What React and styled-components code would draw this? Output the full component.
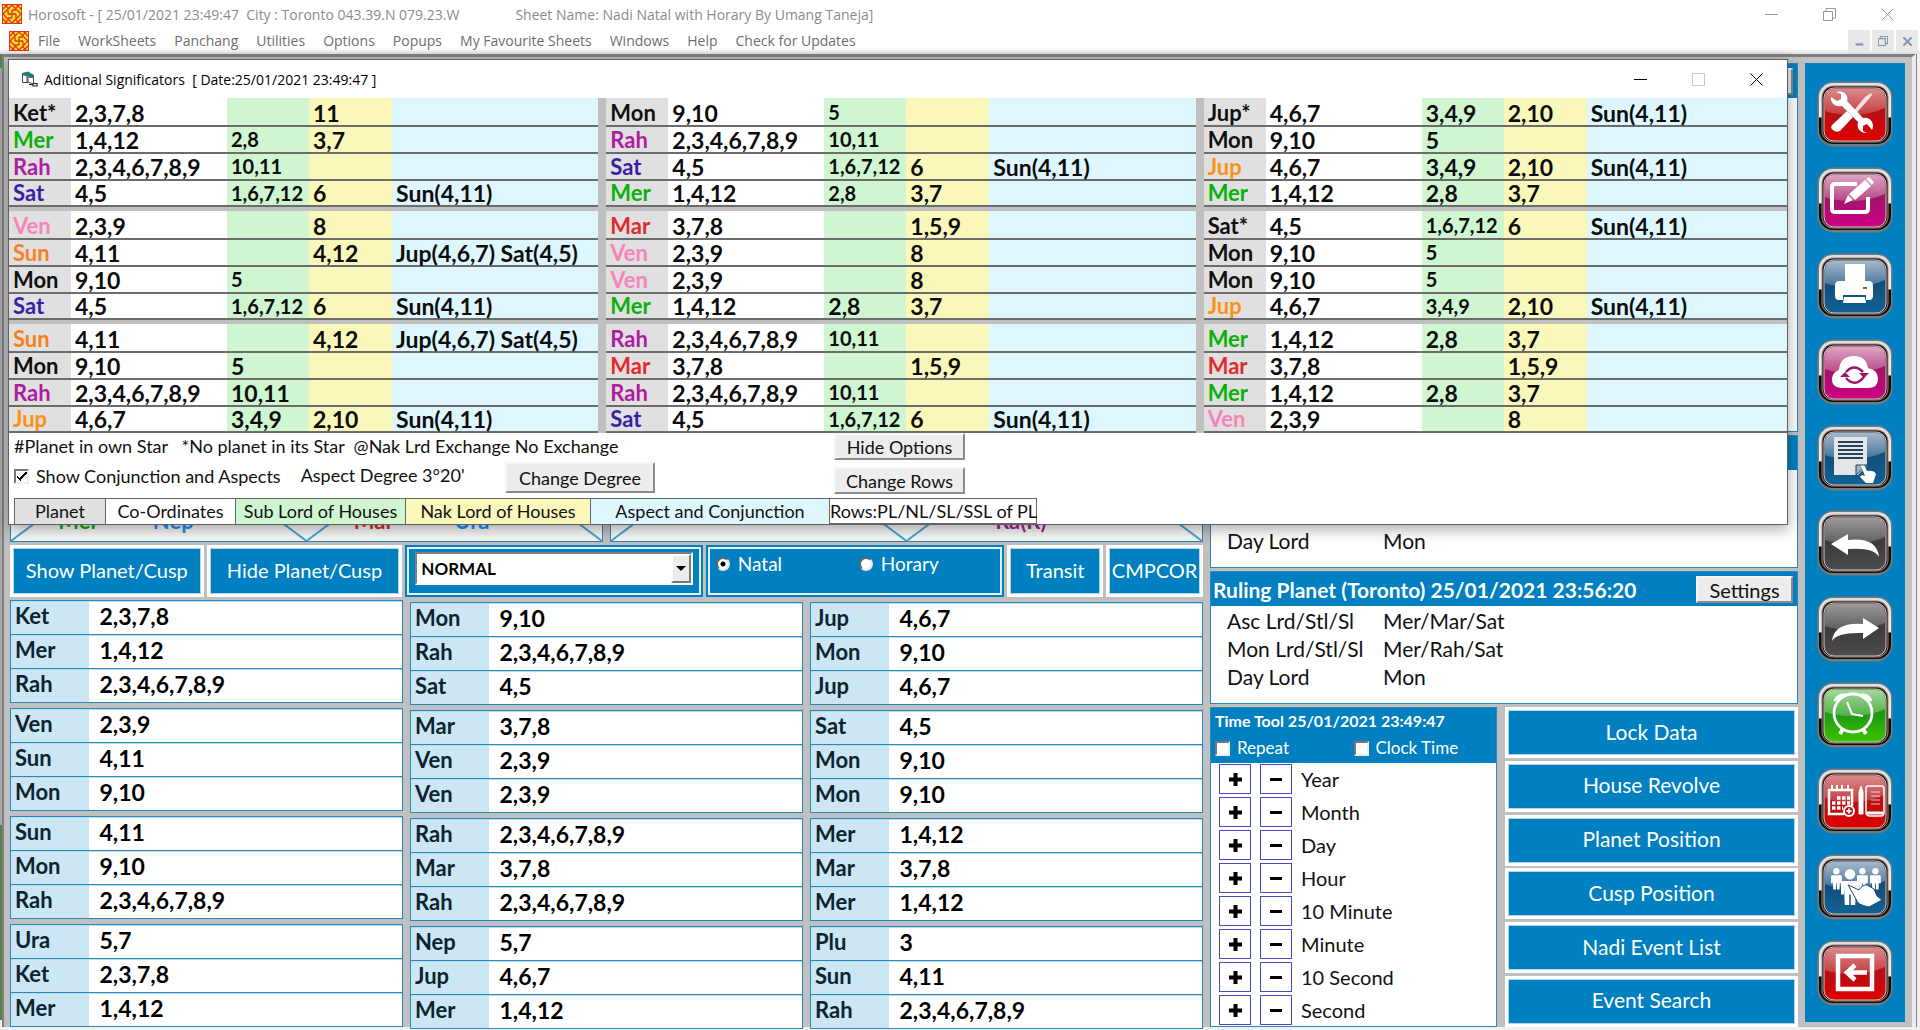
import React from 'react';
import styled, { createGlobalStyle } from 'styled-components';

const BLUE = '#0080c0';
const LINE = '#2a86bb';
const SILVER = '#c0c0c0';

const PLANET_COLORS = {
  Ket: '#101010',
  Mon: '#101010',
  Mer: '#0bb00b',
  Rah: '#b01ca0',
  Sat: '#3a1ea6',
  Ven: '#f784bb',
  Sun: '#fb7f1c',
  Mar: '#df2b2b',
  Jup: '#fb9112'
};

const GlobalStyle = createGlobalStyle`
  * {
    box-sizing: border-box;
  }

  body {
    margin: 0;
    background-color: #fff;
    font-family: Lato, 'Open Sans', sans-serif;
    color: #111;
  }

  button, input, select {
    font-family: inherit;
    margin: 0;
  }

  table {
    border-collapse: collapse;
    border-spacing: 0;
  }
`;

const Screen = styled.div`
  min-height: 100vh;
  display: flex;
  flex-direction: column;
`;

const TitleBar = styled.header`
  display: flex;
  align-items: center;
  height: 28px;
  padding: 0 26px 0 2px;
  font-family: 'Open Sans', sans-serif;
  font-size: 14px;
  color: #8c8c8c;
`;

const TitleText = styled.span`
  white-space: pre;
  margin-left: 6px;
`;

const SheetName = styled.span`
  margin-left: 56px;
  flex-grow: 1;
`;

const WindowControls = styled.div`
  display: flex;
  gap: ${props => props.$gap}px;
`;

const WindowButton = styled.button`
  display: flex;
  padding: 0;
  border: 0;
  background: none;
  color: ${props => props.$color};
`;

const MenuBar = styled.nav`
  display: flex;
  align-items: center;
  height: 26px;
  padding: 0 2px 0 9px;
  background: linear-gradient(#fff 80%, #dcdcdc);
`;

const MenuList = styled.div`
  display: flex;
  flex-grow: 1;
  gap: 18px;
  padding-left: 9px;
`;

const MenuLink = styled.a`
  font-family: 'Open Sans', sans-serif;
  font-size: 14px;
  line-height: 20px;
  color: #6e6e6e;
  text-decoration: none;
`;

const ChildControls = styled.div`
  display: flex;
  align-self: flex-start;
  gap: 2px;
  padding-top: 2px;
`;

const ChildButton = styled.button`
  display: flex;
  align-items: center;
  justify-content: center;
  width: 22px;
  height: 22px;
  padding: 0;
  border: 0;
  background-color: #e8e8e8;
  color: #8399ae;
`;

const Desktop = styled.div`
  position: relative;
  display: flex;
  flex-grow: 1;
  padding: 0 4px 3px 2px;
  background: linear-gradient(#4b8a50 0 14px, #a8a8a8 14px 79%, #55804a 79% 99%, #f0f0f0 99%) 0 0 / 2px 100% no-repeat, #f0f0f0;
`;

const Workspace = styled.main`
  flex-grow: 1;
  display: grid;
  grid-template-columns: 1193fr 588fr 100px;
  gap: 7px;
  padding: 6px 7px 0 6px;
  background-color: ${SILVER};
  border: 0 solid #7f7f7f;
  border-width: 3px 0 0 2px;
  border-right: 4px solid #ececec;
  box-shadow: 1px 0 0 #808080;
`;

const Column = styled.section`
  display: flex;
  flex-direction: column;
  min-width: 0;
`;

const Charts = styled.div`
  flex-grow: 1;
  display: grid;
  grid-template-columns: 1fr 1fr;
  gap: 7px;
`;

const ChartPanel = styled.div`
  display: flex;
  flex-direction: column;
  border: 1px solid ${LINE};
  background-color: #f8f8f8;
`;

const PanelHead = styled.div`
  display: flex;
  align-items: center;
  justify-content: space-between;
  height: 34px;
  padding: 0 4px 0 2px;
  background-color: ${BLUE};
  color: #fff;
  font-size: 21px;
  font-weight: 700;
  white-space: nowrap;
`;

const ChartSvg = styled.svg`
  display: block;
  width: 100%;
  flex: 1 1 0;
  min-height: 300px;

  line {
    stroke: #4aa5d4;
    stroke-width: 2;
  }

  text {
    font-size: 22px;
    font-weight: 700;
  }
`;

const Toolbar = styled.div`
  display: grid;
  grid-template-columns: 194fr 196fr 298fr 299fr 96fr 97fr;
  gap: 3px;
  padding: 3px 0 3px;
`;

const ActionButton = styled.button`
  min-width: 0;
  height: ${props => props.$tall ? 52 : 51}px;
  padding: 0 0 3px;
  border: 3px solid #fff;
  outline: 1px solid #b4d6ea;
  outline-offset: -4px;
  background-color: ${BLUE};
  color: #fff;
  font-size: ${props => props.$tall ? 20 : 21}px;
  white-space: nowrap;
`;

const ToolGroup = styled.div`
  display: flex;
  align-items: flex-start;
  min-width: 0;
  border: 2px solid ${BLUE};
  outline: 2px solid #e4f3fb;
  outline-offset: -4px;
  background-color: ${BLUE};
  padding: 5px 8px;
  color: #fff;
`;

const SelectBox = styled.div`
  position: relative;
  flex-grow: 1;
  height: 33px;
  border: 2px solid;
  border-color: #808080 #fff #fff #808080;
  background-color: #fff;
`;

const Select = styled.select`
  appearance: none;
  width: 100%;
  height: 100%;
  padding: 0 24px 0 4px;
  border: 0;
  background: none;
  color: #000;
  font-size: 17px;
  font-weight: 700;
`;

const SelectArrow = styled.span`
  position: absolute;
  top: 0;
  right: 0;
  bottom: 0;
  width: 20px;
  display: flex;
  align-items: center;
  justify-content: center;
  border: 2px solid;
  border-color: #fff #777 #777 #fff;
  background-color: #ececec;
  pointer-events: none;
`;

const RadioLabel = styled.label`
  display: flex;
  align-items: center;
  gap: 8px;
  font-size: 19px;
  line-height: 24px;

  &:first-child {
    width: 143px;
  }
`;

const Radio = styled.input`
  appearance: none;
  width: 14px;
  height: 14px;
  border: 2px solid;
  border-color: #666 #e8e8e8 #e8e8e8 #666;
  border-radius: 50%;
  background-color: #fff;

  &:checked {
    background-image: radial-gradient(circle, #000 0 2px, transparent 3px);
  }
`;

const Houses = styled.div`
  display: grid;
  grid-template-columns: repeat(3, 1fr);
  gap: 7px;
`;

const HouseColumn = styled.div`
  display: flex;
  flex-direction: column;
  gap: 5px;

  &:not(:first-child) {
    padding-top: 2px;
    margin-bottom: -2px;
  }
`;

const HouseTable = styled.table`
  width: 100%;
  height: 103px;
  table-layout: fixed;
  border: 1px solid ${LINE};
  background-color: #fff;
  text-align: left;
`;

const HouseName = styled.th`
  width: 78px;
  height: 34px;
  padding: 0 0 4px 4px;
  border-bottom: 1px solid ${LINE};
  box-shadow: inset 0 1px 0 #b9dff3;
  background-color: #cce6f4;
  color: #0b2430;
  font-size: 22px;
  line-height: 26px;
`;

const HouseValue = styled.td`
  padding: 0 0 4px 11px;
  border-bottom: 1px solid ${LINE};
  box-shadow: inset 0 1px 0 #b9dff3;
  color: #000;
  font-size: 23px;
  font-weight: 700;
  line-height: 26px;
`;

const RulingPanel = styled.div`
  flex-grow: ${props => props.$grow ? 1 : 0};
  min-height: 133px;
  margin-bottom: 3px;
  border: 1px solid ${LINE};
  background-color: #fff;
`;

const RulingTable = styled.table`
  margin: 1px 0 0 16px;
  font-size: 21px;
  line-height: 28px;
  text-align: left;

  th {
    width: 156px;
    padding: 0;
    font-weight: 400;
  }

  td {
    padding: 0;
  }
`;

const BevelButton = styled.button`
  width: ${props => props.$width}px;
  height: ${props => props.$height || 27}px;
  padding: 0;
  border: 2px solid;
  border-color: #f6f6f6 #8a8a8a #8a8a8a #f6f6f6;
  background-color: #ededed;
  color: #111;
  font-size: ${props => props.$size || 18}px;
`;

const ToolRow = styled.div`
  display: grid;
  grid-template-columns: 287fr 293fr;
  gap: 8px;
`;

const TimeTool = styled.div`
  border: 1px solid ${LINE};
  background-color: #fff;
`;

const TimeHead = styled.div`
  height: 55px;
  padding: 0 4px;
  background-color: ${BLUE};
  color: #fff;
`;

const TimeTitle = styled.div`
  font-size: 16px;
  line-height: 26px;
  font-weight: 700;
  white-space: nowrap;
`;

const TimeChecks = styled.div`
  display: grid;
  grid-template-columns: 1fr 1fr;
`;

const CheckLabel = styled.label`
  display: flex;
  align-items: center;
  gap: 7px;
  font-size: ${props => props.$size}px;
  line-height: 28px;
  white-space: nowrap;
`;

const Checkbox = styled.input`
  appearance: none;
  width: 15px;
  height: 15px;
  flex-shrink: 0;
  border: 2px solid;
  border-color: #777 #eee #eee #777;
  background-color: #fff;

  &:checked {
    background-image: linear-gradient(45deg, transparent 30%, #000 30% 46%, transparent 46%),
      linear-gradient(-45deg, transparent 40%, #000 40% 60%, transparent 60%);
    background-size: 4px 7px, 8px 8px;
    background-position: 1px 3px, 3px 1px;
    background-repeat: no-repeat;
  }
`;

const StepList = styled.div`
  display: flex;
  flex-direction: column;
  gap: 3px;
  padding: 1px 0 1px 8px;
`;

const Step = styled.div`
  display: flex;
  align-items: center;
  gap: 9px;
  font-size: 20px;
  line-height: 30px;
`;

const StepButton = styled.button`
  display: flex;
  align-items: center;
  justify-content: center;
  width: 32px;
  height: 30px;
  padding: 0;
  border: 1px solid #4a4ac0;
  background-color: #fff;
`;

const Actions = styled.div`
  display: flex;
  flex-direction: column;
  justify-content: space-between;
`;

const Sidebar = styled.aside`
  display: flex;
  flex-direction: column;
  align-items: center;
  justify-content: space-between;
  margin-bottom: 5px;
  padding: 18px 0 16px;
  background-color: ${BLUE};
`;

const SideButton = styled.button`
  display: flex;
  padding: 0;
  border: 0;
  background: none;
`;

const Popup = styled.section`
  position: absolute;
  top: 5px;
  left: 8px;
  right: 132px;
  border: 1px solid #606060;
  background-color: #fff;
  box-shadow: 0 4px 14px rgba(0, 0, 0, 0.35);
`;

const PopupHead = styled.div`
  display: flex;
  align-items: center;
  height: 38px;
  padding: 0 24px 0 12px;
  font-family: 'Open Sans', sans-serif;
  font-size: 14px;
  color: #000;
`;

const PopupTitle = styled.span`
  flex-grow: 1;
  margin-left: 6px;
  white-space: pre;
`;

const Significators = styled.div`
  display: grid;
  grid-template-columns: 589fr 589fr 583fr;
  column-gap: 8px;
  row-gap: 4px;
  background-color: ${SILVER};
`;

const SigTable = styled.table`
  width: 100%;
  table-layout: fixed;
  font-weight: 700;
  color: #0c0c0c;
  text-align: left;
  white-space: nowrap;

  th, td {
    height: 27px;
    padding: 0 0 0 4px;
    border-bottom: 2px solid #6c6c6c;
    line-height: 24px;
  }

  tr:first-child > * {
    height: 28px;
    padding-top: 2px;
  }

  tr:last-child > * {
    height: 26px;
  }
`;

const SigName = styled.th`
  width: 62px;
  background-color: #e0e0e0;
  color: ${props => props.$color};
  font-size: 22px;
`;

const SigCell = styled.td`
  width: ${props => props.$width ? `${props.$width}px` : 'auto'};
  background-color: ${props => props.$bg};
  font-size: ${props => props.$small ? 20 : 23}px;
  vertical-align: ${props => props.$small ? 'top' : 'middle'};
`;

const Options = styled.div`
  display: grid;
  grid-template-columns: 491px 329px 131px;
  grid-template-rows: 29px 36px;
  padding-left: 5px;
  font-size: 18px;
  line-height: 26px;
`;

const Note = styled.div`
  grid-column: span 2;
  white-space: pre;
`;

const Conjunction = styled.div`
  display: flex;
  align-items: flex-start;
  gap: 20px;
`;

const ButtonSlot = styled.div`
  display: flex;
  align-items: ${props => props.$end ? 'flex-end' : 'flex-start'};
  padding-bottom: ${props => props.$end ? 4 : 0}px;
`;

const Legend = styled.div`
  display: flex;
  padding-left: 5px;
`;

const LegendItem = styled.div`
  width: ${props => props.$width}px;
  height: 26px;
  border: 1px solid #666;
  border-width: 1px 0 0 1px;
  background-color: ${props => props.$bg};
  font-size: 18px;
  line-height: 25px;
  text-align: center;
  white-space: nowrap;

  &:last-child {
    border-width: 1px;
  }
`;

const MENU = ['File', 'WorkSheets', 'Panchang', 'Utilities', 'Options', 'Popups',
  'My Favourite Sheets', 'Windows', 'Help', 'Check for Updates'];

// name, coordinates, sub lord, nak lord, aspect, small sub lord text
const SIGNIFICATORS = [
  [
    ['Ket*', '2,3,7,8', '', '11', ''],
    ['Mer', '1,4,12', '2,8', '3,7', '', true],
    ['Rah', '2,3,4,6,7,8,9', '10,11', '', '', true],
    ['Sat', '4,5', '1,6,7,12', '6', 'Sun(4,11)', true]
  ],
  [
    ['Mon', '9,10', '5', '', '', true],
    ['Rah', '2,3,4,6,7,8,9', '10,11', '', '', true],
    ['Sat', '4,5', '1,6,7,12', '6', 'Sun(4,11)', true],
    ['Mer', '1,4,12', '2,8', '3,7', '', true]
  ],
  [
    ['Jup*', '4,6,7', '3,4,9', '2,10', 'Sun(4,11)'],
    ['Mon', '9,10', '5', '', ''],
    ['Jup', '4,6,7', '3,4,9', '2,10', 'Sun(4,11)'],
    ['Mer', '1,4,12', '2,8', '3,7', '']
  ],
  [
    ['Ven', '2,3,9', '', '8', ''],
    ['Sun', '4,11', '', '4,12', 'Jup(4,6,7) Sat(4,5)'],
    ['Mon', '9,10', '5', '', '', true],
    ['Sat', '4,5', '1,6,7,12', '6', 'Sun(4,11)', true]
  ],
  [
    ['Mar', '3,7,8', '', '1,5,9', ''],
    ['Ven', '2,3,9', '', '8', ''],
    ['Ven', '2,3,9', '', '8', ''],
    ['Mer', '1,4,12', '2,8', '3,7', '']
  ],
  [
    ['Sat*', '4,5', '1,6,7,12', '6', 'Sun(4,11)', true],
    ['Mon', '9,10', '5', '', '', true],
    ['Mon', '9,10', '5', '', '', true],
    ['Jup', '4,6,7', '3,4,9', '2,10', 'Sun(4,11)', true]
  ],
  [
    ['Sun', '4,11', '', '4,12', 'Jup(4,6,7) Sat(4,5)'],
    ['Mon', '9,10', '5', '', ''],
    ['Rah', '2,3,4,6,7,8,9', '10,11', '', ''],
    ['Jup', '4,6,7', '3,4,9', '2,10', 'Sun(4,11)']
  ],
  [
    ['Rah', '2,3,4,6,7,8,9', '10,11', '', '', true],
    ['Mar', '3,7,8', '', '1,5,9', ''],
    ['Rah', '2,3,4,6,7,8,9', '10,11', '', '', true],
    ['Sat', '4,5', '1,6,7,12', '6', 'Sun(4,11)', true]
  ],
  [
    ['Mer', '1,4,12', '2,8', '3,7', ''],
    ['Mar', '3,7,8', '', '1,5,9', ''],
    ['Mer', '1,4,12', '2,8', '3,7', ''],
    ['Ven', '2,3,9', '', '8', '']
  ]
];

const HOUSES = [
  [
    [['Ket', '2,3,7,8'], ['Mer', '1,4,12'], ['Rah', '2,3,4,6,7,8,9']],
    [['Ven', '2,3,9'], ['Sun', '4,11'], ['Mon', '9,10']],
    [['Sun', '4,11'], ['Mon', '9,10'], ['Rah', '2,3,4,6,7,8,9']],
    [['Ura', '5,7'], ['Ket', '2,3,7,8'], ['Mer', '1,4,12']]
  ],
  [
    [['Mon', '9,10'], ['Rah', '2,3,4,6,7,8,9'], ['Sat', '4,5']],
    [['Mar', '3,7,8'], ['Ven', '2,3,9'], ['Ven', '2,3,9']],
    [['Rah', '2,3,4,6,7,8,9'], ['Mar', '3,7,8'], ['Rah', '2,3,4,6,7,8,9']],
    [['Nep', '5,7'], ['Jup', '4,6,7'], ['Mer', '1,4,12']]
  ],
  [
    [['Jup', '4,6,7'], ['Mon', '9,10'], ['Jup', '4,6,7']],
    [['Sat', '4,5'], ['Mon', '9,10'], ['Mon', '9,10']],
    [['Mer', '1,4,12'], ['Mar', '3,7,8'], ['Mer', '1,4,12']],
    [['Plu', '3'], ['Sun', '4,11'], ['Rah', '2,3,4,6,7,8,9']]
  ]
];

const LEGEND = [
  ['Planet', 91, '#e0e0e0'],
  ['Co-Ordinates', 130, '#fff'],
  ['Sub Lord of Houses', 170, '#cff5d1'],
  ['Nak Lord of Houses', 185, '#faf7bb'],
  ['Aspect and Conjunction', 239, '#def6fe'],
  ['Rows:PL/NL/SL/SSL of PL', 208, '#fff']
];

const RULING = [
  ['Asc Lrd/Stl/Sl', 'Mer/Mar/Sat'],
  ['Mon Lrd/Stl/Sl', 'Mer/Rah/Sat'],
  ['Day Lord', 'Mon']
];

const STEPS = ['Year', 'Month', 'Day', 'Hour', '10 Minute', 'Minute', '10 Second', 'Second'];

const ACTIONS = ['Lock Data', 'House Revolve', 'Planet Position', 'Cusp Position',
  'Nadi Event List', 'Event Search'];

const LogoIcon = () => (
  <svg width="20" height="20" viewBox="0 0 20 20" aria-hidden="true">
    <rect width="20" height="20" fill="#ffdc28" />
    <g fill="none" stroke="#e2331a" strokeWidth="1.3">
      <path d="M10 1 L19 10 L10 19 L1 10 Z" />
      <path d="M0 6 L6 0 M14 0 L20 6 M0 14 L6 20 M14 20 L20 14" />
      <path d="M2 0 L7 5 M18 0 L13 5 M2 20 L7 15 M18 20 L13 15" />
      <path d="M10 6 V14 M6 10 H14 M10 6 H14 M10 14 H6 M6 10 V6 M14 10 V14" />
    </g>
    <rect x="0.5" y="0.5" width="19" height="19" fill="none" stroke="#e2331a" />
  </svg>
);

const FormIcon = () => (
  <svg width="17" height="16" viewBox="0 0 17 16" aria-hidden="true">
    <path d="M1 2 L7 0.500 L13 4 V6.500 L6 5.500 L1 4 Z" fill="#1f7f7a" />
    <path d="M1.500 3 V11.500 H7 M6 5.500 V11" fill="none" stroke="#444" strokeWidth="1" />
    <path d="M7 6 L12.500 6.500 V13 L7 11 Z" fill="#fff" stroke="#444" strokeWidth="1" />
    <path d="M8 13.500 H12 V15 H16 V12.500 H13" fill="none" stroke="#222" strokeWidth="1.200" />
  </svg>
);

const Glyph = ({ size = 13, width = 1, children }) => (
  <svg width={size} height={size} viewBox="0 0 13 13" fill="none" stroke="currentColor" strokeWidth={width} aria-hidden="true">
    {children}
  </svg>
);

const minimizePath = <path d="M0 6.5 H13" />;
const restorePath = <path d="M0.5 3.5 H9.5 V12.5 H0.5 Z M3 3 V0.5 H12.5 V10 H10" />;
const closePath = <path d="M0.5 0.5 L12.5 12.5 M12.5 0.5 L0.5 12.5" />;

const TINTS = {
  red: ['#d98a8a', '#c33a3e', '#b80f14', '#e00000'],
  pink: ['#dba6c0', '#b84686', '#a5126c', '#cf0084'],
  navy: ['#a7b8c9', '#41719a', '#12507c', '#0f6295'],
  gray: ['#9a9a9a', '#5c5c5c', '#3c3c3c', '#4c4c4c'],
  green: ['#a3d89a', '#4fb045', '#1f9a14', '#3cc400']
};

const GlossButton = ({ name, tint, children }) => {
  const [top, mid, low, bottom] = TINTS[tint];
  const id = name.replace(/\s/g, '');

  return (
    <SideButton type="button" aria-label={name}>
      <svg width="76" height="66" viewBox="0 0 76 66" aria-hidden="true">
        <defs>
          <linearGradient id={`rim${id}`} x1="0" y1="0" x2="0" y2="1">
            <stop offset="0" stopColor="#dedede" />
            <stop offset="0.56" stopColor="#efefef" />
            <stop offset="0.57" stopColor="#050505" />
            <stop offset="1" stopColor="#111" />
          </linearGradient>
          <linearGradient id={`face${id}`} x1="0" y1="0" x2="0" y2="1">
            <stop offset="0" stopColor={low} />
            <stop offset="0.5" stopColor={low} />
            <stop offset="1" stopColor={bottom} />
          </linearGradient>
          <linearGradient id={`gloss${id}`} x1="0" y1="0" x2="0" y2="1">
            <stop offset="0" stopColor={top} />
            <stop offset="1" stopColor={mid} />
          </linearGradient>
        </defs>
        <rect x="0.5" y="0.5" width="75" height="65" rx="16" fill="#77797b" />
        <rect x="2" y="2" width="72" height="61" rx="14" fill={`url(#rim${id})`} />
        <rect x="4.5" y="4.5" width="67" height="57" rx="12" fill="#8d8886" />
        <rect x="5.5" y="5.5" width="65" height="55" rx="11" fill="#241414" />
        <rect x="7" y="7" width="62" height="53" rx="10" fill={`url(#face${id})`} stroke="#d9c3bd" strokeWidth="1" />
        <path d="M8 30 V17 Q8 8 17 8 H59 Q68 8 68 17 V27 Q50 35 30 34 Q16 33 8 30 Z" fill={`url(#gloss${id})`} />
        {children}
      </svg>
    </SideButton>
  );
};

const Person = ({ x, y, scale = 1 }) => (
  <g transform={`translate(${x} ${y}) scale(${scale})`} fill="#fff">
    <circle cx="6" cy="3.5" r="3.5" />
    <path d="M1 8 H11 Q12 8 12 9.500 V17 H10 V11 L9.500 24 H6.500 V17 H5.500 V24 H2.500 L2 11 V17 H0 V9.500 Q0 8 1 8 Z" />
  </g>
);

const SIDE_ITEMS = [
  { name: 'Tools', tint: 'red', icon: (
    <g fill="#fff">
      <path d="M15 44 L30 30 L36 36 L23 50 Q19 52 16 49 Q13 47 15 44 Z" />
      <path d="M34 33 L48 16 L54 12 L55 14 L51 19 L37 35 Z" opacity="0.8" />
      <path d="M14 16 L20 20 L24 18 L24 13 L19 11 Q27 9 30 15 Q31 18 30 20 L46 37 Q52 36 55 41 Q57 45 55 49 L50 43 L46 45 L46 50 L50 52 Q43 52 41 47 Q40 44 41 41 L25 25 Q17 26 15 21 Q13 19 14 16 Z" />
    </g>
  ) },
  { name: 'Edit', tint: 'pink', icon: (
    <g>
      <path d="M40 17 H18 Q15 17 15 20 V42 Q15 45 18 45 H48 Q51 45 51 42 V30" fill="none" stroke="#fff" strokeWidth="4" />
      <path d="M27 37 L31 28 L36 33 Z M32 27 L48 13 L54 19 L38 33 Z M49 12 L52 10 L57 15 L55 18 Z" fill="#fff" />
    </g>
  ) },
  { name: 'Print', tint: 'navy', icon: (
    <g fill="#fff">
      <rect x="28" y="11" width="20" height="16" />
      <path d="M22 28 H28 V27 H48 V28 H52 Q56 28 56 33 V43 Q56 47 52 47 H49 V42 H26 V47 H22 Q18 47 18 43 V33 Q18 28 22 28 Z" />
      <path d="M27 44 H48 L49 50 H26 Z" />
      <path d="M46 35 H50" stroke="#333" strokeWidth="1.500" />
    </g>
  ) },
  { name: 'Cloud Sync', tint: 'pink', icon: (
    <g>
      <path d="M24 49 Q14 48 15 39 Q16 33 22 31 Q23 17 37 17 Q49 17 51 29 Q61 31 61 40 Q61 49 51 49 Z" fill="#fff" />
      <path d="M29 33 Q37 24 46 33 M47 38 Q38 49 29 39" fill="none" stroke="#9c1566" strokeWidth="2.500" />
      <path d="M42 34 H52 L47 39 Z M23 38 H33 L28 33 Z" fill="#9c1566" />
    </g>
  ) },
  { name: 'Document', tint: 'navy', icon: (
    <g>
      <path d="M17 12 H50 V41 L41 50 H17 Z" fill="#e3e5e6" />
      <path d="M21 17 H46 M21 21 H46 M21 25 H46 M21 29 H46 M21 33 H46" stroke="#23435d" strokeWidth="1.800" />
      <path d="M39 50 V40 H50 Z" fill="#9fb3c2" stroke="#23435d" />
      <path d="M44 41 Q46 39 48 42 L50 46 Q57 45 59 49 L56 58 H49 L43 52 Q44 49 48 51 Z" fill="#fff" />
    </g>
  ) },
  { name: 'Back', tint: 'gray', icon: (
    <path d="M14 34 L31 24 V30 Q60 27 62 47 Q57 37 31 39 V45 Z" fill="#fff" />
  ) },
  { name: 'Forward', tint: 'gray', icon: (
    <path d="M62 32 L46 22 V28 Q17 26 15 45 Q20 36 46 37 V43 Z" fill="#fff" />
  ) },
  { name: 'Alarm', tint: 'green', icon: (
    <g fill="none" stroke="#fff" strokeWidth="2.800">
      <circle cx="36" cy="31" r="19" />
      <path d="M30 20 L35 32 L46 34" strokeWidth="2" />
      <path d="M26 47 L23 52 M46 47 L49 52" strokeWidth="4" />
      <path d="M17 19 Q19 11 29 12 L22 17 Z M55 19 Q53 11 43 12 L50 17 Z" fill="#fff" strokeWidth="1" />
    </g>
  ) },
  { name: 'Calendar', tint: 'red', icon: (
    <g fill="none" stroke="#fff">
      <path d="M12 22 H35 V38 M12 21 V46 H27" strokeWidth="2.500" />
      <path d="M15 17 V22 M20 17 V22 M25 17 V22 M31 17 V22" strokeWidth="2" />
      <path d="M20 30 H33 M15 35 H33 M15 40 H26" strokeWidth="3.500" strokeDasharray="3.500 1.500" />
      <circle cx="32" cy="43" r="5" strokeWidth="2" />
      <path d="M32 40.500 V45.500 M29.500 43 H34.500" strokeWidth="2" />
      <path d="M42 46 V24 L44 18 L46 24 V46 Z" fill="#fff" strokeWidth="1" />
      <path d="M51 18 H64 Q67 18 67 21 V44 Q67 48 64 48 H53 Q49 48 49 44 V21 Q49 18 51 18 Z" strokeWidth="1.500" />
      <path d="M50 45 H66" strokeWidth="3" />
      <path d="M54 24 H63 M54 28 H63 M54 32 H63 M54 36 H63" strokeWidth="1" opacity="0.7" />
    </g>
  ) },
  { name: 'People', tint: 'navy', icon: (
    <g>
      <Person x={14} y={14} scale={0.9} />
      <Person x={40} y={14} scale={0.9} />
      <Person x={53} y={14} scale={0.9} />
      <Person x={24} y={15} scale={1.5} />
      <path d="M31 31 L42 36 Q46 30 50 31 L57 35 L60 42 L65 46 L52 53 Q40 51 39 45 Z" fill="#fff" stroke="#1d4f77" />
    </g>
  ) },
  { name: 'Exit', tint: 'red', icon: (
    <g fill="none" stroke="#fff">
      <rect x="21" y="16" width="34" height="33" strokeWidth="4.500" />
      <path d="M50 32.500 H30 M38 25 L30 32.500 L38 40" strokeWidth="4.500" />
    </g>
  ) }
];

const Chart = ({ title, labels }) => (
  <ChartPanel>
    <PanelHead>{title}</PanelHead>
    <ChartSvg>
      <line x1="0" y1="0" x2="100%" y2="100%" />
      <line x1="100%" y1="0" x2="0" y2="100%" />
      <line x1="50%" y1="0" x2="100%" y2="50%" />
      <line x1="100%" y1="50%" x2="50%" y2="100%" />
      <line x1="50%" y1="100%" x2="0" y2="50%" />
      <line x1="0" y1="50%" x2="50%" y2="0" />
      {labels.map(([text, x, color]) => (
        <text key={text} x={x} y="100%" dy="-12" fill={color}>{text}</text>
      ))}
    </ChartSvg>
  </ChartPanel>
);

const RulingCard = ({ title, grow, settings }) => (
  <RulingPanel $grow={grow}>
    <PanelHead>
      {title}
      {settings && <BevelButton type="button" $width={97} $size={20}>Settings</BevelButton>}
    </PanelHead>
    <RulingTable>
      <tbody>
        {RULING.map(([label, value]) => (
          <tr key={label}>
            <th scope="row">{label}</th>
            <td>{value}</td>
          </tr>
        ))}
      </tbody>
    </RulingTable>
  </RulingPanel>
);

const SigGroup = ({ rows }) => (
  <SigTable>
    <tbody>
      {rows.map(([name, coords, sub, nak, aspect, small], i) => (
        <tr key={i}>
          <SigName scope="row" $color={PLANET_COLORS[name] || '#101010'}>{name}</SigName>
          <SigCell $width={156} $bg="#fff">{coords}</SigCell>
          <SigCell $width={82} $bg="#cff5d1" $small={small}>{sub}</SigCell>
          <SigCell $width={83} $bg="#faf7bb">{nak}</SigCell>
          <SigCell $bg="#def6fe">{aspect}</SigCell>
        </tr>
      ))}
    </tbody>
  </SigTable>
);

const SignificatorsWindow = () => (
  <Popup>
    <PopupHead>
      <FormIcon />
      <PopupTitle>{'Aditional Significators  [ Date:25/01/2021 23:49:47 ]'}</PopupTitle>
      <WindowControls $gap={45}>
        <WindowButton type="button" aria-label="Minimize" $color="#000"><Glyph>{minimizePath}</Glyph></WindowButton>
        <WindowButton type="button" aria-label="Maximize" $color="#c8c8c8"><Glyph><path d="M0.5 0.5 H12.5 V12.5 H0.5 Z" /></Glyph></WindowButton>
        <WindowButton type="button" aria-label="Close" $color="#000"><Glyph>{closePath}</Glyph></WindowButton>
      </WindowControls>
    </PopupHead>
    <Significators>
      {SIGNIFICATORS.map((rows, i) => <SigGroup key={i} rows={rows} />)}
    </Significators>
    <Options>
      <Note>{'#Planet in own Star   *No planet in its Star  @Nak Lrd Exchange No Exchange'}</Note>
      <BevelButton type="button" $width={131}>Hide Options</BevelButton>
      <Conjunction>
        <CheckLabel $size={18}>
          <Checkbox type="checkbox" defaultChecked />
          Show Conjunction and Aspects
        </CheckLabel>
        <span>Aspect Degree 3°20'</span>
      </Conjunction>
      <ButtonSlot>
        <BevelButton type="button" $width={150} $height={31}>Change Degree</BevelButton>
      </ButtonSlot>
      <ButtonSlot $end>
        <BevelButton type="button" $width={131}>Change Rows</BevelButton>
      </ButtonSlot>
    </Options>
    <Legend>
      {LEGEND.map(([label, width, bg]) => (
        <LegendItem key={label} $width={width} $bg={bg}>{label}</LegendItem>
      ))}
    </Legend>
  </Popup>
);

const App = () => (
  <Screen>
    <GlobalStyle />
    <TitleBar>
      <LogoIcon />
      <TitleText>{'Horosoft - [ 25/01/2021 23:49:47  City : Toronto 043.39.N 079.23.W'}</TitleText>
      <SheetName>Sheet Name: Nadi Natal with Horary By Umang Taneja]</SheetName>
      <WindowControls $gap={45}>
        <WindowButton type="button" aria-label="Minimize" $color="#999"><Glyph>{minimizePath}</Glyph></WindowButton>
        <WindowButton type="button" aria-label="Restore" $color="#999"><Glyph>{restorePath}</Glyph></WindowButton>
        <WindowButton type="button" aria-label="Close" $color="#999"><Glyph>{closePath}</Glyph></WindowButton>
      </WindowControls>
    </TitleBar>
    <MenuBar>
      <LogoIcon />
      <MenuList>
        {MENU.map(item => <MenuLink key={item} href="#">{item}</MenuLink>)}
      </MenuList>
      <ChildControls>
        <ChildButton type="button" aria-label="Minimize sheet"><Glyph size={10} width={3}><path d="M2 11 H12" /></Glyph></ChildButton>
        <ChildButton type="button" aria-label="Restore sheet"><Glyph size={10} width={1.5}>{restorePath}</Glyph></ChildButton>
        <ChildButton type="button" aria-label="Close sheet"><Glyph size={9} width={3}>{closePath}</Glyph></ChildButton>
      </ChildControls>
    </MenuBar>
    <Desktop>
      <Workspace>
        <Column>
          <Charts>
            <Chart
              title="Natal"
              labels={[['Mer', '8%', '#0bb00b'], ['Nep', '24%', '#1e90ff'], ['Mar', '58%', '#df2b2b'], ['Ura', '75%', '#1e90ff']]}
            />
            <Chart title="Horary" labels={[['Ra(R)', '65%', '#b01ca0']]} />
          </Charts>
          <Toolbar>
            <ActionButton type="button" $tall>Show Planet/Cusp</ActionButton>
            <ActionButton type="button" $tall>Hide Planet/Cusp</ActionButton>
            <ToolGroup>
              <SelectBox>
                <Select aria-label="Chart mode" defaultValue="NORMAL">
                  <option>NORMAL</option>
                </Select>
                <SelectArrow>
                  <svg width="10" height="5" viewBox="0 0 10 5" aria-hidden="true"><path d="M0 0 H10 L5 5 Z" /></svg>
                </SelectArrow>
              </SelectBox>
            </ToolGroup>
            <ToolGroup>
              <RadioLabel><Radio type="radio" name="chart" defaultChecked />Natal</RadioLabel>
              <RadioLabel><Radio type="radio" name="chart" />Horary</RadioLabel>
            </ToolGroup>
            <ActionButton type="button" $tall>Transit</ActionButton>
            <ActionButton type="button" $tall>CMPCOR</ActionButton>
          </Toolbar>
          <Houses>
            {HOUSES.map((column, i) => (
              <HouseColumn key={i}>
                {column.map((rows, j) => (
                  <HouseTable key={j}>
                    <tbody>
                      {rows.map(([name, value], k) => (
                        <tr key={k}>
                          <HouseName scope="row">{name}</HouseName>
                          <HouseValue>{value}</HouseValue>
                        </tr>
                      ))}
                    </tbody>
                  </HouseTable>
                ))}
              </HouseColumn>
            ))}
          </Houses>
        </Column>
        <Column>
          <RulingPanel $grow>
            <PanelHead>
              <span />
              <BevelButton type="button" $width={97} $size={20}>Settings</BevelButton>
            </PanelHead>
          </RulingPanel>
          <RulingCard title="Ruling Planet" />
          <RulingCard title="Ruling Planet (Toronto) 25/01/2021 23:56:20" settings />
          <ToolRow>
            <TimeTool>
              <TimeHead>
                <TimeTitle>Time Tool 25/01/2021 23:49:47</TimeTitle>
                <TimeChecks>
                  <CheckLabel $size={17}><Checkbox type="checkbox" />Repeat</CheckLabel>
                  <CheckLabel $size={17}><Checkbox type="checkbox" />Clock Time</CheckLabel>
                </TimeChecks>
              </TimeHead>
              <StepList>
                {STEPS.map(step => (
                  <Step key={step}>
                    <StepButton type="button" aria-label={`${step} forward`}>
                      <svg width="13" height="13" viewBox="0 0 13 13" aria-hidden="true"><path d="M4.500 0 H8.500 V4.500 H13 V8.500 H8.500 V13 H4.500 V8.500 H0 V4.500 H4.500 Z" /></svg>
                    </StepButton>
                    <StepButton type="button" aria-label={`${step} back`}>
                      <svg width="12" height="3" viewBox="0 0 12 3" aria-hidden="true"><path d="M0 0 H12 V3 H0 Z" /></svg>
                    </StepButton>
                    {step}
                  </Step>
                ))}
              </StepList>
            </TimeTool>
            <Actions>
              {ACTIONS.map(action => <ActionButton key={action} type="button">{action}</ActionButton>)}
            </Actions>
          </ToolRow>
        </Column>
        <Sidebar>
          {SIDE_ITEMS.map(item => (
            <GlossButton key={item.name} name={item.name} tint={item.tint}>{item.icon}</GlossButton>
          ))}
        </Sidebar>
      </Workspace>
      <SignificatorsWindow />
    </Desktop>
  </Screen>
);

export default App;
